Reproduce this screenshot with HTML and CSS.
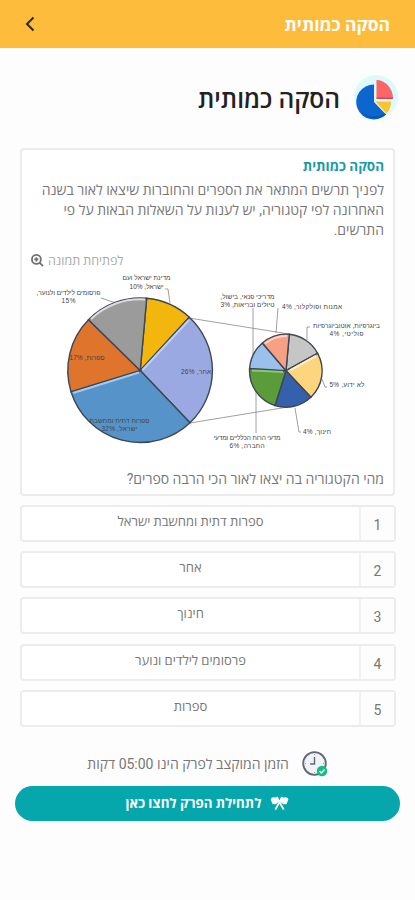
FILE: index.html
```html
<!DOCTYPE html>
<html lang="he" dir="rtl">
<head>
    <meta charset="UTF-8">
    <meta name="viewport" content="width=device-width, initial-scale=1.0">
    <title>הסקה כמותית</title>
    <link rel="stylesheet" href="styles.css">
</head>
<body>

    <header class="top-bar">
        <span class="top-title">הסקה כמותית</span>
        <svg class="back-icon" viewBox="0 0 10 16"><path d="M8.5 1.5 L2 8 L8.5 14.5"/></svg>
    </header>

    <main>
        <div class="page-title">
            <svg class="pie-icon" viewBox="0 0 46 46">
                <circle cx="23" cy="22" r="22" fill="#dcfafb"/>
                <path d="M21 27 V9.500 A17.500 17.500 0 1 0 33 39.500 Z" fill="#0d66cd"/>
                <path d="M8 36 A17.500 17.500 0 0 0 33 39.500 L32 38.500 A17.500 16 0 0 1 8 36 Z" fill="#0b50a8"/>
                <path d="M23.500 23.500 V5 A16.500 18.500 0 0 1 40 23.500 Z" fill="#fb6769"/>
                <path d="M23.500 22.500 H40 V24 H23.500 Z" fill="#df4257"/>
                <path d="M22.500 26.500 H38 Q38 34 33.500 38.500 Z" fill="#fbc32d"/>
            </svg>
            <h1>הסקה כמותית</h1>
        </div>

        <section class="question-card">
            <h2>הסקה כמותית</h2>
            <p class="intro">לפניך תרשים המתאר את הספרים והחוברות שיצאו לאור בשנה<br>האחרונה לפי קטגוריה, יש לענות על השאלות הבאות על פי<br>התרשים.</p>
            <div class="open-image">
                <span>לפתיחת תמונה</span>
                <svg class="zoom-icon" viewBox="0 0 14 14">
                    <circle cx="5.8" cy="5.8" r="4.8"/>
                    <path d="M9.2 9.2 L13 13 M3.6 5.8 H8 M5.8 3.6 V8"/>
                </svg>
            </div>

            <svg class="chart" viewBox="21 270 374 190">
                <!-- קווי חיבור -->
                <g class="lines">
                    <path d="M189 318 L289 334 M190 423 L288 407"/>
                    <path d="M101 298 L116 303 M165 289 H168 L170 303"/>
                    <path d="M253 308 V367 M278 308 L276 333 M310 327 H307 V340"/>
                    <path d="M322 379 L325 387 H327 M295 408 L299 432 H301 M256 380 V433"/>
                </g>
                <!-- עוגה ראשית -->
                <g class="slices">
                    <path fill="#f3b60c" d="M140.2 370.5 L146.7 298.3 A72.5 72.5 0 0 1 189.3 317.2 Z"/>
                    <path fill="#9ba9e2" d="M140.2 370.5 L189.3 317.2 A72.5 72.5 0 0 1 190 422.7 Z"/>
                    <path fill="#5593c8" d="M140.2 370.5 L190 422.7 A72.5 72.5 0 0 1 71 391.7 Z"/>
                    <path fill="#df742d" d="M140.2 370.5 L71 391.7 A72.5 72.5 0 0 1 88.5 319.7 Z"/>
                    <path fill="#9b9b9b" d="M140.2 370.5 L88.5 319.7 A72.5 72.5 0 0 1 146.7 298.3 Z"/>
                </g>
                <g class="shine">
                    <path stroke="#b9d3fa" d="M142.5 370 L189 320"/>
                    <path stroke="#9fcdf5" d="M139 372.5 L73 393"/>
                    <path stroke="#dcdcdc" d="M91 319 A71 71 0 0 1 145 299.5"/>
                </g>
                <!-- עוגה משנית -->
                <g class="slices">
                    <path fill="#c6c6c6" d="M286 370.7 L289.3 334.3 A36.5 36.5 0 0 1 317.6 353.3 Z"/>
                    <path fill="#fcd57e" d="M286 370.7 L317.6 353.3 A36.5 36.5 0 0 1 310.9 397.3 Z"/>
                    <path fill="#3560ac" d="M286 370.7 L310.9 397.3 A36.5 36.5 0 0 1 275 405.5 Z"/>
                    <path fill="#5a9c39" d="M286 370.7 L275 405.5 A36.5 36.5 0 0 1 249.6 368.5 Z"/>
                    <path fill="#99c1ec" d="M286 370.7 L249.6 368.5 A36.5 36.5 0 0 1 262.4 343 Z"/>
                    <path fill="#f7a184" d="M286 370.7 L262.4 343 A36.5 36.5 0 0 1 289.3 334.3 Z"/>
                </g>
                <g class="shine">
                    <path stroke="#8fc574" d="M252 370.5 L283 372"/>
                    <path stroke="#fff0c5" d="M290 370.3 L316 356"/>
                    <path stroke="#ffd3c2" d="M265 343.5 A34.5 34.5 0 0 1 287 336"/>
                </g>
                <g class="labels">
                    <text x="146.500" y="280" textLength="48">מדינת ישראל ועם</text>
                    <text x="146.500" y="288.500" textLength="34">ישראל, 10%</text>
                    <text x="68.500" y="295" textLength="64">פרסומים לילדים ולנוער,</text>
                    <text x="68.500" y="303" textLength="14">15%</text>
                    <text x="87" y="360" textLength="35">ספרות, 17%</text>
                    <text x="196" y="374" textLength="30">אחר, 26%</text>
                    <text x="119.500" y="423" textLength="60">ספרות דתית ומחשבת</text>
                    <text x="119.500" y="431" textLength="36">ישראל, 32%</text>
                    <text x="247.500" y="299" textLength="54">מדריכי פנאי, בישול,</text>
                    <text x="247.500" y="307" textLength="54">טיולים ובריאות, 3%</text>
                    <text x="312" y="308.500" textLength="60">אמנות ופולקלור, 4%</text>
                    <text x="346.500" y="327.500" textLength="67">ביוגרפיות, אוטוביוגרפיות</text>
                    <text x="346.500" y="335.500" textLength="34">פוליטי, 4%</text>
                    <text x="347" y="387" textLength="35">לא ידוע, 5%</text>
                    <text x="317" y="433.500" textLength="28">חינוך, 4%</text>
                    <text x="247" y="440" textLength="67">מדעי הרוח הכלליים ומדעי</text>
                    <text x="247" y="448" textLength="35">החברה, 6%</text>
                </g>
            </svg>

            <p class="question">מהי הקטגוריה בה יצאו לאור הכי הרבה ספרים?</p>
        </section>

        <ul class="answers">
            <li><span class="num">1</span><span class="answer">ספרות דתית ומחשבת ישראל</span></li>
            <li><span class="num">2</span><span class="answer">אחר</span></li>
            <li><span class="num">3</span><span class="answer">חינוך</span></li>
            <li><span class="num">4</span><span class="answer">פרסומים לילדים ונוער</span></li>
            <li><span class="num">5</span><span class="answer">ספרות</span></li>
        </ul>

        <div class="time-row">
            <svg class="clock-icon" viewBox="0 0 26 26">
                <circle cx="12.500" cy="12.500" r="11.300" fill="#eef3fa" stroke="#666578" stroke-width="1.800"/>
                <path d="M12.500 6 V13 H8" fill="none" stroke="#666578" stroke-width="1.400"/>
                <path d="M12.500 3 V4 M3 12.500 H4 M21 12.500 H22 M12.500 21 V22" stroke="#9a9cab"/>
                <circle cx="20" cy="20" r="5.200" fill="#10bd83"/>
                <path d="M17.500 20 L19.500 22 L22.500 18.500" fill="none" stroke="#fff" stroke-width="1.300"/>
            </svg>
            <span>הזמן המוקצב לפרק הינו 05:00 דקות</span>
        </div>

        <button class="start-btn" type="button">
            <svg class="flags-icon" viewBox="0 0 20 16">
                <path d="M0.500 3.500 Q2 0.500 4.500 1.500 Q6 2 8 0.500 L10 5.500 Q8.500 6.500 7 8 Q5 9.500 2.500 8.500 Z"/>
                <path d="M19.500 3.500 Q18 0.500 15.500 1.500 Q14 2 12 0.500 L10 5.500 Q11.500 6.500 13 8 Q15 9.500 17.500 8.500 Z"/>
                <path class="pole" d="M7.500 2 L14.500 14.500 M12.500 2 L5.500 14.500"/>
            </svg>
            <span>לתחילת הפרק לחצו כאן</span>
        </button>
    </main>

</body>
</html>
```
FILE: styles.css
```css
* {
    box-sizing: border-box;
}
body {
    margin: 0;
    font-family: Roboto, "Open Sans", "Noto Sans", sans-serif;
    background-color: #fdfdfd;
    color: #777;
}
h1, h2, p, ul {
    margin: 0;
    padding: 0;
    font-weight: normal;
}
.top-bar {
    display: flex;
    align-items: center;
    justify-content: space-between;
    height: 48px;
    padding: 0 25px;
    background-color: #fdbc3b;
    color: #fff;
}
.top-title {
    font-size: 17.5px;
    font-weight: 700;
}
.back-icon {
    width: 10px;
    height: 16px;
    fill: none;
    stroke: #2d2a24;
    stroke-width: 2;
}
.page-title {
    display: flex;
    align-items: center;
    gap: 13px;
    height: 100px;
    padding-right: 16px;
}
.page-title h1 {
    font-size: 24.5px;
    font-weight: 600;
    color: #222;
}
.pie-icon {
    width: 46px;
    height: 46px;
}
.question-card {
    height: 348px;
    margin: 0 20px;
    padding: 5px 9px 0 9px;
    background-color: #fff;
    border: 2px solid #ececec;
    border-radius: 4px;
}
.question-card h2 {
    font-size: 13.5px;
    line-height: 22px;
    font-weight: 700;
    color: #179ca3;
}
.intro {
    margin-top: 3px;
    font-size: 14px;
    line-height: 20px;
    white-space: nowrap;
}
.open-image {
    display: flex;
    align-items: center;
    justify-content: flex-end;
    gap: 4px;
    height: 20px;
    margin-top: 10px;
    font-size: 12.5px;
    color: #aaa;
}
.zoom-icon {
    width: 13px;
    height: 13px;
    fill: none;
    stroke: #707070;
    stroke-width: 1.9;
}
.chart {
    display: block;
    width: 374px;
    height: 190px;
    margin: 0 -11px 0 -9px;
}
.lines path {
    fill: none;
    stroke: #888;
    stroke-width: 0.8;
}
.slices path {
    stroke: #3f4654;
    stroke-width: 1.4;
}
.shine path {
    fill: none;
    stroke-width: 2;
}
.labels text {
    font-family: "Liberation Sans", Arial, sans-serif;
    font-size: 6.5px;
    fill: #444;
    text-anchor: middle;
}
.question {
    margin-top: 9px;
    font-size: 14px;
    line-height: 20px;
}
.answers {
    display: flex;
    flex-direction: column;
    gap: 9.2px;
    margin: 9px 19px 0 20px;
    list-style: none;
}
.answers li {
    display: flex;
    height: 37px;
    background-color: #fff;
    border: 2px solid #ececec;
    border-radius: 4px;
}
.num {
    width: 35px;
    padding-top: 2px;
    border-left: 2px solid #f1f1f1;
    background-color: #fdfdfd;
    font-size: 14px;
    line-height: 33px;
    text-align: center;
}
.answer {
    flex: 1;
    font-size: 13px;
    line-height: 29px;
    text-align: center;
}
.time-row {
    display: flex;
    align-items: center;
    justify-content: center;
    gap: 13px;
    height: 26px;
    margin-top: 24px;
    font-size: 14px;
}
.clock-icon {
    width: 26px;
    height: 26px;
}
.start-btn {
    display: flex;
    align-items: center;
    justify-content: center;
    gap: 9px;
    width: 385px;
    height: 35px;
    margin: 9px 15px 0;
    border: none;
    border-radius: 18px;
    background-color: #05a6ac;
    color: #fff;
    font-family: inherit;
    font-size: 13.3px;
    font-weight: 700;
}
.flags-icon {
    width: 19px;
    height: 15px;
    fill: #fff;
}
.flags-icon .pole {
    fill: none;
    stroke: #fff;
    stroke-width: 2;
}
```
